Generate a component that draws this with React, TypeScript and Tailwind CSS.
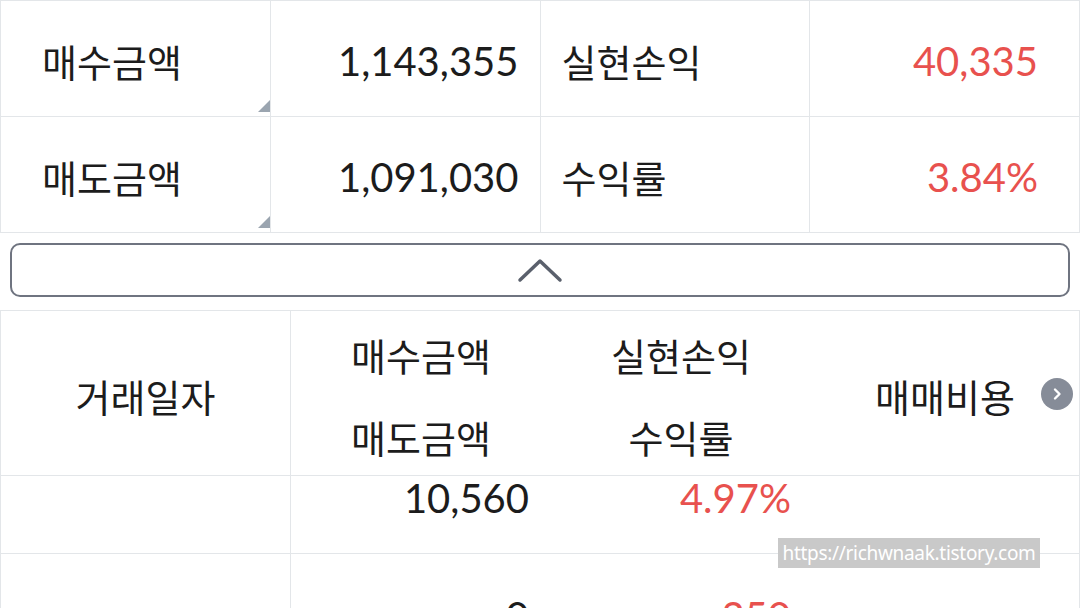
import React from "react";

const KR = { fontFamily: '"Noto Sans CJK KR", "Noto Sans", sans-serif' };
const NUM = { fontFamily: 'Lato, "Noto Sans CJK KR", sans-serif' };

function Tri() {
  return (
    <div className="absolute right-0 bottom-[4px] w-0 h-0 border-l-[12px] border-l-transparent border-b-[12px] border-b-[#9ba5b0]" />
  );
}

function TopCell({ children, className = "" }: { children?: React.ReactNode; className?: string }) {
  return (
    <div className={`relative h-[116px] border-r border-b border-[#e3e6e9] flex items-center pt-[4px] ${className}`}>
      {children}
    </div>
  );
}

export default function App() {
  return (
    <div className="w-[1080px] h-[608px] overflow-hidden bg-white relative text-[#1c1c1c]">
      {/* Top summary table */}
      <div className="grid grid-cols-4 border-t border-l border-[#e3e6e9]">
        <TopCell className="pl-[41px]">
          <span style={KR} className="text-[38px] leading-none">매수금액</span>
          <Tri />
        </TopCell>
        <TopCell className="justify-end pr-[21px]">
          <span style={NUM} className="text-[40px] leading-none">1,143,355</span>
        </TopCell>
        <TopCell className="pl-[21px]">
          <span style={KR} className="text-[38px] leading-none">실현손익</span>
        </TopCell>
        <TopCell className="justify-end pr-[41px]">
          <span style={NUM} className="text-[40px] leading-none text-[#e8514e]">40,335</span>
        </TopCell>
        <TopCell className="pl-[41px]">
          <span style={KR} className="text-[38px] leading-none">매도금액</span>
          <Tri />
        </TopCell>
        <TopCell className="justify-end pr-[21px]">
          <span style={NUM} className="text-[40px] leading-none">1,091,030</span>
        </TopCell>
        <TopCell className="pl-[21px]">
          <span style={KR} className="text-[38px] leading-none">수익률</span>
        </TopCell>
        <TopCell className="justify-end pr-[41px]">
          <span style={NUM} className="text-[40px] leading-none text-[#e8514e]">3.84%</span>
        </TopCell>
      </div>

      {/* Collapse button */}
      <div className="mx-[10px] mt-[10px] h-[54px] border-2 border-[#6f7480] rounded-[10px] flex items-center justify-center">
        <svg width="46" height="26" viewBox="0 0 46 26" fill="none">
          <path d="M3 23 L23 4 L43 23" stroke="#5a606c" strokeWidth="3.5" strokeLinecap="round" strokeLinejoin="round" />
        </svg>
      </div>

      {/* Lower list table */}
      <div className="mt-[13px] border-t border-l border-r border-[#e3e6e9]">
        {/* header */}
        <div className="flex h-[165px] border-b border-[#e3e6e9]">
          <div className="w-[290px] border-r border-[#e3e6e9] flex items-center justify-center pt-[6px]">
            <span style={KR} className="text-[38px] leading-none">거래일자</span>
          </div>
          <div className="w-[260px] flex flex-col items-center justify-center gap-[44px] pt-[6px]">
            <span style={KR} className="text-[38px] leading-none">매수금액</span>
            <span style={KR} className="text-[38px] leading-none">매도금액</span>
          </div>
          <div className="w-[260px] flex flex-col items-center justify-center gap-[44px] pt-[6px]">
            <span style={KR} className="text-[38px] leading-none">실현손익</span>
            <span style={KR} className="text-[38px] leading-none">수익률</span>
          </div>
          <div className="flex-1 relative flex items-center justify-center pt-[6px]">
            <span style={KR} className="text-[38px] leading-none">매매비용</span>
            <div className="absolute right-[6px] top-[67px] w-[32px] h-[32px] rounded-full bg-[#868c98] flex items-center justify-center">
              <svg width="14" height="14" viewBox="0 0 14 14" fill="none">
                <path d="M5 2.5 L9.5 7 L5 11.5" stroke="#ffffff" strokeWidth="2.4" strokeLinecap="round" strokeLinejoin="round" />
              </svg>
            </div>
          </div>
        </div>
        {/* data row 1 */}
        <div className="flex h-[78px] border-b border-[#e3e6e9]">
          <div className="w-[290px] border-r border-[#e3e6e9]" />
          <div className="w-[260px] flex justify-end pr-[22px] pt-[2px]">
            <span style={NUM} className="text-[40px] leading-none">10,560</span>
          </div>
          <div className="w-[260px] flex justify-end pr-[20px] pt-[2px]">
            <span style={NUM} className="text-[40px] leading-none text-[#e8514e]">4.97%</span>
          </div>
          <div className="flex-1" />
        </div>
        {/* data row 2 (cut off) */}
        <div className="flex h-[100px]">
          <div className="w-[290px] border-r border-[#e3e6e9]" />
          <div className="w-[260px] flex justify-end pr-[22px] pt-[42px]">
            <span style={NUM} className="text-[40px] leading-none">0</span>
          </div>
          <div className="w-[260px] flex justify-end pr-[20px] pt-[42px]">
            <span style={NUM} className="text-[40px] leading-none text-[#e8514e]">250</span>
          </div>
          <div className="flex-1" />
        </div>
      </div>

      {/* Watermark */}
      <div className="absolute left-[778px] top-[538px] w-[262px] h-[30px] bg-[#c9c9c9] flex items-center justify-center">
        <span style={{ fontFamily: '"Noto Sans", "Open Sans", sans-serif' }} className="text-[19px] leading-none text-white tracking-[-0.3px]">
          https://richwnaak.tistory.com
        </span>
      </div>
    </div>
  );
}
